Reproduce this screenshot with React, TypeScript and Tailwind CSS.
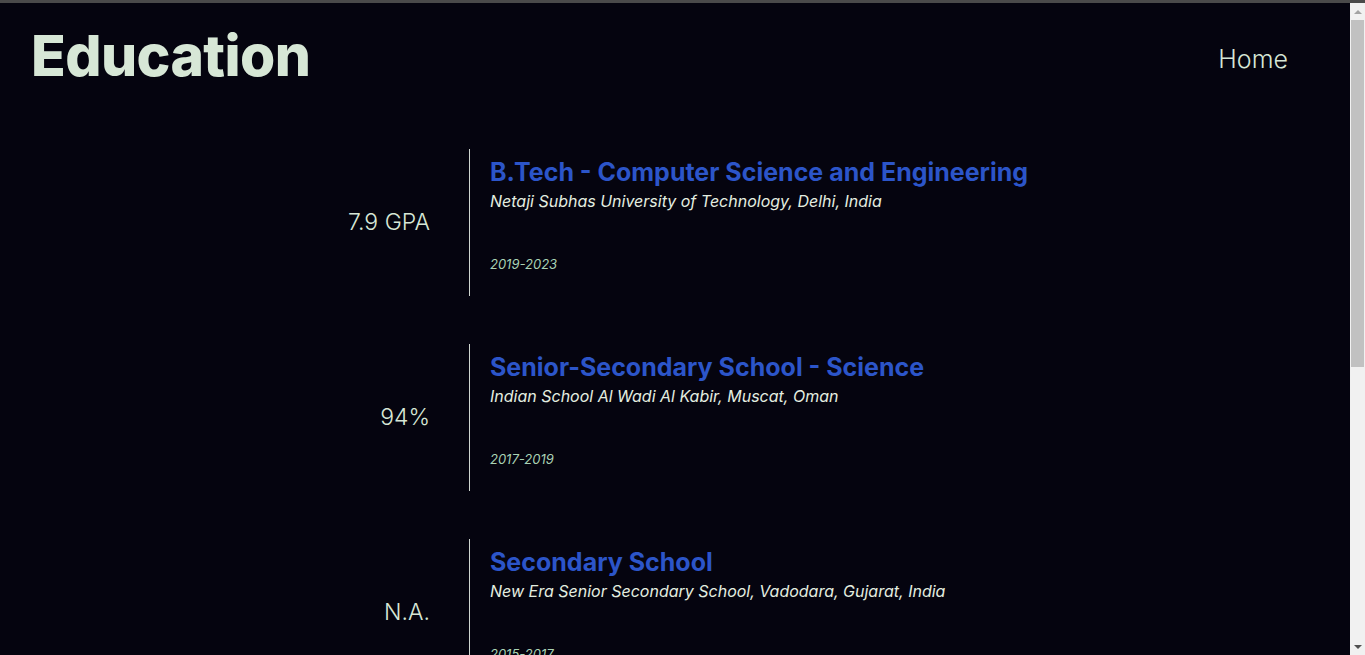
const rows = [
  {
    score: "7.9 GPA",
    title: "B.Tech - Computer Science and Engineering",
    place: "Netaji Subhas University of Technology, Delhi, India",
    years: "2019-2023",
  },
  {
    score: "94%",
    title: "Senior-Secondary School - Science",
    place: "Indian School Al Wadi Al Kabir, Muscat, Oman",
    years: "2017-2019",
  },
  {
    score: "N.A.",
    title: "Secondary School",
    place: "New Era Senior Secondary School, Vadodara, Gujarat, India",
    years: "2015-2017",
  },
];

function Scrollbar() {
  return (
    <div className="w-[15px] shrink-0 bg-[#f1f1f1] flex flex-col items-center">
      <div className="h-[17px] w-full flex items-center justify-center">
        <div className="w-0 h-0 border-x-[4px] border-x-transparent border-b-[4px] border-b-[#a3a3a3]" />
      </div>
      <div className="w-[13px] h-[347px] bg-[#c1c1c1]" />
      <div className="flex-1" />
      <div className="h-[17px] w-full flex items-center justify-center">
        <div className="w-0 h-0 border-x-[4px] border-x-transparent border-t-[4px] border-t-[#505050]" />
      </div>
    </div>
  );
}

export default function App() {
  return (
    <div className="h-screen flex flex-col bg-[#05040f] overflow-hidden font-['Inter',sans-serif]">
      <div className="h-[3px] shrink-0 bg-[#4a4a4a]" />
      <div className="flex flex-1 min-h-0">
        <main className="flex-1 overflow-hidden">
          <header className="flex items-start justify-between pl-[31px] pr-[62px]">
            <h1 className="text-[57px] leading-none font-extrabold tracking-[-0.6px] text-[#d7e7d6] mt-[24px]">
              Education
            </h1>
            <a className="text-[25px] font-light text-[#d7e7d6] mt-[38px]">Home</a>
          </header>

          <section className="mt-[65px] flex flex-col gap-[48px]">
            {rows.map((r) => (
              <div key={r.title} className="flex h-[147px]">
                <div className="w-[430px] shrink-0 flex items-center justify-end text-[23px] font-light text-[#d7e7d6]">
                  {r.score}
                </div>
                <div className="w-px ml-[39px] bg-[#cfd6cf]" />
                <div className="pl-[20px] pt-[8px] flex flex-col">
                  <h2 className="text-[25px] leading-[30px] font-bold text-[#2c55c9]">{r.title}</h2>
                  <p className="text-[16px] italic text-[#e4eee0] mt-[2px]">{r.place}</p>
                  <p className="text-[13px] italic text-[#a9d2b4] mt-[42px]">{r.years}</p>
                </div>
              </div>
            ))}
          </section>
        </main>
        <Scrollbar />
      </div>
    </div>
  );
}
